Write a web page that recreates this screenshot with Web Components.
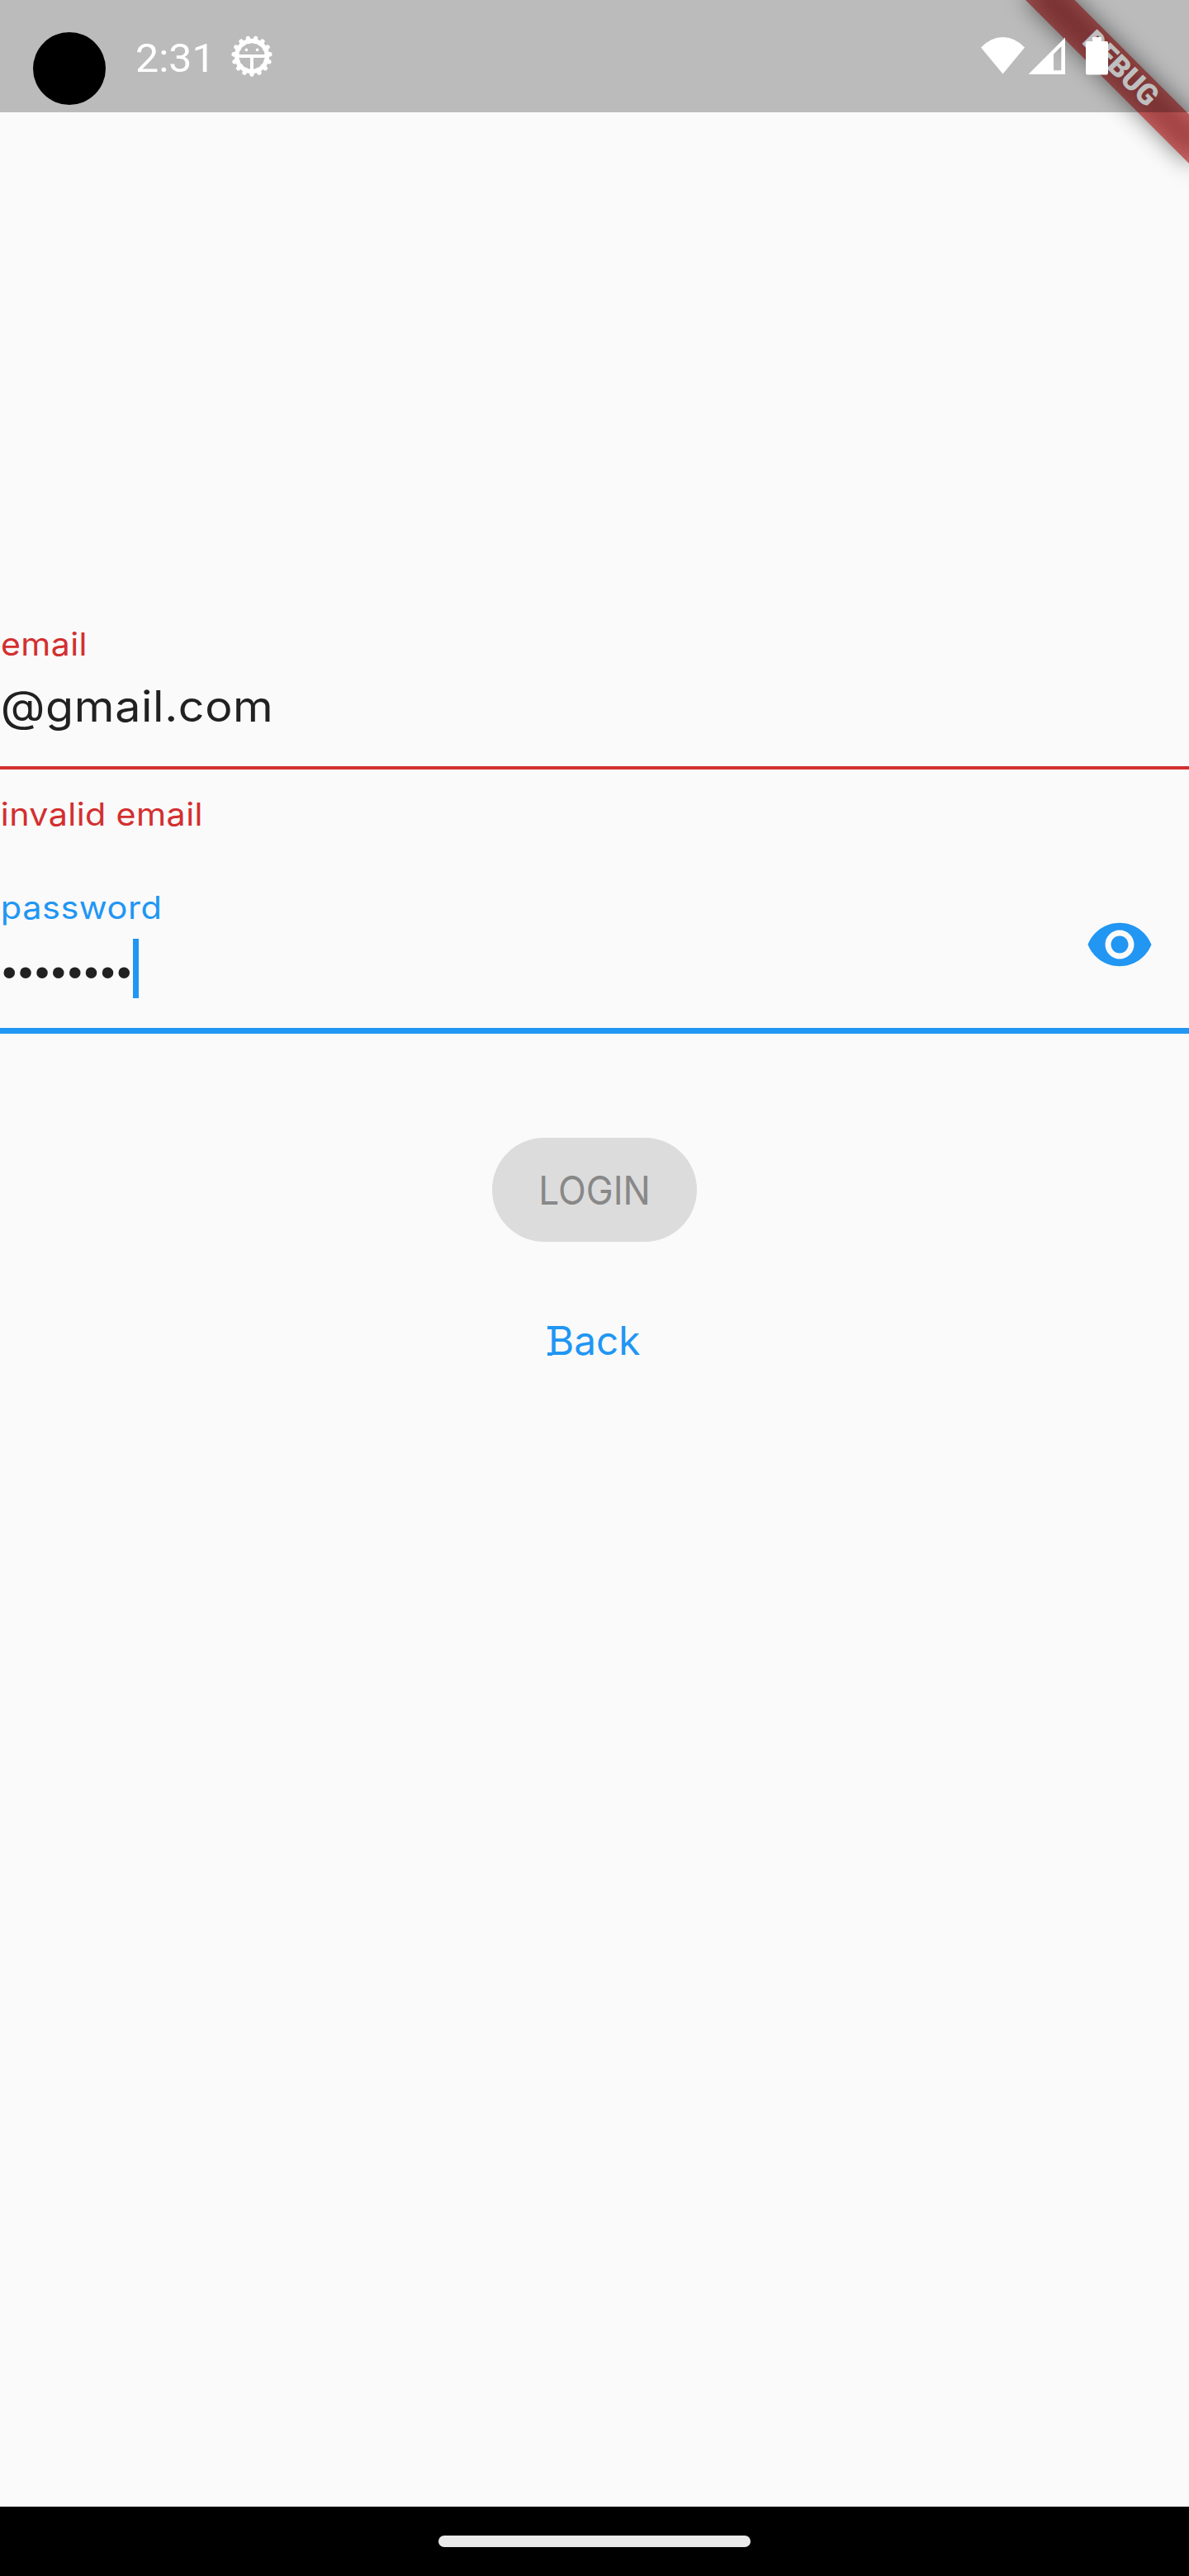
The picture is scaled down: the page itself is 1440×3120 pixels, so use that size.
<!DOCTYPE html>
<html lang="en">
<head>
<meta charset="utf-8">
<title>Login</title>
<style>
html,body{margin:0;padding:0;background:#fafafa}
body{width:1440px;height:3120px;overflow:hidden}
</style>
</head>
<body>
<login-app></login-app>
<script>
function mount(el, html) {
  el.attachShadow({mode: 'open'}).innerHTML = html;
  return el.shadowRoot;
}

// A single line of text whose inked width is fitted to the "ink" attribute:
// the "spacing" share (0 to 1) of the difference goes to letter-spacing,
// the rest to a horizontal scale.
customElements.define('text-run', class extends HTMLElement {
  connectedCallback() {
    const size = +this.getAttribute('size');
    const ink = +this.getAttribute('ink');
    const line = this.getAttribute('line');
    const family = this.getAttribute('family') || 'Inter';
    const weight = this.getAttribute('weight') || '400';
    const text = this.getAttribute('text');
    const share = +(this.getAttribute('spacing') || 0);
    const ctx = document.createElement('canvas').getContext('2d');
    ctx.font = `${weight} ${size}px "${family}"`;
    const m = ctx.measureText(text);
    const natural = m.actualBoundingBoxRight + m.actualBoundingBoxLeft;
    const extra = (ink - natural) * share;
    const gap = extra / (text.length - 1);
    const k = ink / (natural + extra);
    mount(this, `<style>
      :host{display:block;width:${ink}px;height:${line}px;white-space:nowrap}
      span{display:inline-block;font:${weight} ${size}px/${line}px "${family}",sans-serif;letter-spacing:${gap}px;
        transform-origin:0 0;transform:scaleX(${k}) translateX(${m.actualBoundingBoxLeft}px)}
    </style><span></span>`).querySelector('span').textContent = text;
  }
});

customElements.define('status-bar', class extends HTMLElement {
  connectedCallback() {
    mount(this, `<style>
      :host{display:flex;box-sizing:border-box;width:1440px;height:136px;padding-left:40px;color:#fff;background:rgba(0,0,0,.25)}
      .cam{width:88px;height:88px;border-radius:50%;background:#000;margin-top:39px}
      text-run{margin:40.5px 0 0 38px}
      .gear{width:52px;height:52px;margin:42px 0 0 28px}
      .right{margin:40px 92px 0 auto;width:160px;height:56px}
      svg{display:block}
    </style>
    <div class="cam"></div>
    <text-run text="2:31" family="Roboto" size="49" line="60" ink="85"></text-run>
    <svg class="gear" viewBox="-26 -26 52 52"><g id="teeth" stroke="#fff" stroke-width="5.4" stroke-linecap="round"></g>
      <circle r="18.5" fill="none" stroke="#fff" stroke-width="5.4"/>
      <path d="M-17 0H17M0 0V18" stroke="#fff" stroke-width="4" fill="none"/>
      <circle cx="-6.6" cy="-7.6" r="1.8" fill="#fff"/><circle cx="6.6" cy="-7.6" r="1.8" fill="#fff"/></svg>
    <svg class="right" viewBox="1188 40 160 56" fill="#fff">
      <path d="M1188 57.5Q1200 45 1214.5 45T1241 57.5L1214.5 89.5Z"/>
      <path fill-rule="evenodd" d="M1245.5 90L1290 45.5V90ZM1276 65.5V85.3H1285.3V56.2Z"/>
      <path d="M1323 45H1334V50H1340Q1342 50 1342 52V88Q1342 90.5 1340 90.5H1317Q1315 90.5 1315 88V52Q1315 50 1317 50H1323Z"/>
    </svg>`);
    let t = '';
    for (let i = 0; i < 15; i++) {
      const a = Math.PI / 2 + i * 2 * Math.PI / 15, c = Math.cos(a), s = Math.sin(a);
      t += `<path d="M${c * 18} ${s * 18}L${c * 22} ${s * 22}"/>`;
    }
    this.shadowRoot.getElementById('teeth').innerHTML = t;
  }
});

customElements.define('debug-banner', class extends HTMLElement {
  connectedCallback() {
    mount(this, `<style>
      :host{display:block;position:absolute;left:1440px;top:0;width:0;height:0;transform:rotate(45deg);transform-origin:0 0}
      div{position:absolute;left:-140px;top:98px;width:280px;height:42px}
      .shade{background:rgba(0,0,0,.5);filter:blur(13.9px)}
      .band{background:rgba(183,28,28,.627);color:#fff;display:flex;justify-content:center}
      text-run{margin-top:-2px}
    </style><div class="shade"></div>
    <div class="band"><text-run text="DEBUG" family="Roboto" weight="900" size="35.7" line="42" ink="110"></text-run></div>`);
  }
});

customElements.define('text-field', class extends HTMLElement {
  connectedCallback() {
    mount(this, `<style>
      :host{display:block;color:#d32f2f}
      .row{display:flex;box-sizing:border-box}
      .main{flex:1}
      .rule{background:currentColor}
    </style>
    <div class="row"><div class="main"><slot name="label"></slot><slot name="value"></slot></div><slot name="icon"></slot></div>
    <div class="rule"></div><slot name="helper"></slot>`);
    this.shadowRoot.querySelector('.row').style.height = this.getAttribute('row') + 'px';
    this.shadowRoot.querySelector('.rule').style.height = this.getAttribute('rule') + 'px';
  }
});

customElements.define('eye-icon', class extends HTMLElement {
  connectedCallback() {
    mount(this, `<style>:host{display:block;width:84px;height:84px;margin:28px 42px 0 0}svg{display:block}</style>
    <svg width="84" height="84" viewBox="0 0 24 24" fill="currentColor"><path d="M12 4.5C7 4.5 2.73 7.61 1 12c1.73 4.39 6 7.5 11 7.5s9.27-3.11 11-7.5c-1.73-4.39-6-7.5-11-7.5zM12 17c-2.76 0-5-2.24-5-5s2.24-5 5-5 5 2.24 5 5-2.24 5-5 5zm0-8c-1.66 0-3 1.34-3 3s1.34 3 3 3 3-1.34 3-3-1.34-3-3-3z"/></svg>`);
  }
});

customElements.define('pill-button', class extends HTMLElement {
  connectedCallback() {
    mount(this, `<style>:host{display:flex;align-items:center;justify-content:center;box-sizing:border-box;width:248px;height:126px;padding-top:2px;border-radius:63px;background:#dcdcdc;color:#888}</style><slot></slot>`);
  }
});

customElements.define('nav-bar', class extends HTMLElement {
  connectedCallback() {
    mount(this, `<style>:host{display:flex;align-items:center;justify-content:center;height:84px;background:#000}
      div{width:378px;height:14px;border-radius:7px;background:#eaeaea}</style><div></div>`);
  }
});

customElements.define('login-app', class extends HTMLElement {
  connectedCallback() {
    mount(this, `<style>
      :host{display:flex;flex-direction:column;position:relative;width:1440px;height:3120px;overflow:hidden;background:#fafafa}
      status-bar{position:relative;z-index:2;flex:none}
      debug-banner{z-index:1}
      main{flex:1;padding-top:619px;display:flex;flex-direction:column}
      .email{height:319px}
      .email [slot=label]{margin-left:2px}
      .email [slot=value]{margin:17px 0 0 4px;color:#212121}
      .email [slot=helper]{margin:29px 0 0 3px}
      .pass{color:#2196f3;height:178px}
      .pass [slot=label]{margin-left:3px}
      .pass [slot=value]{display:flex;margin-top:13px;padding-left:3.5px}
      .pass [slot=value] text-run{color:#212121}
      .cursor{width:7px;height:71.5px;margin-left:3.5px;background:#2196f3}
      pill-button{margin:126px 0 0 596px}
      .back{display:flex;margin:89.5px 0 0 663px;width:112px;color:#2196f3}
      .serif{box-sizing:border-box;width:6px;height:35.5px;margin-top:12.5px;margin-right:-1px;border:solid currentColor;border-width:4px 0}
    </style>
    <status-bar></status-bar>
    <main>
      <text-field class="email" row="173" rule="4">
        <text-run slot="label" text="email" size="38.5" line="50" ink="101" spacing=".2"></text-run>
        <text-run slot="value" text="@gmail.com" size="52" line="67" ink="323" spacing=".2"></text-run>
        <text-run slot="helper" text="invalid email" size="38.5" line="50" ink="240" spacing=".2"></text-run>
      </text-field>
      <text-field class="pass" row="171" rule="7">
        <text-run slot="label" text="password" size="38.5" line="50" ink="190" spacing=".2"></text-run>
        <div slot="value"><text-run text="••••••••" family="Liberation Sans" size="50" line="82" ink="154" spacing="1"></text-run><div class="cursor"></div></div>
        <eye-icon slot="icon"></eye-icon>
      </text-field>
      <pill-button><text-run text="LOGIN" size="48" line="62" ink="128"></text-run></pill-button>
      <div class="back"><div class="serif"></div><text-run text="Back" size="48" line="60" ink="107"></text-run></div>
    </main>
    <nav-bar></nav-bar>
    <debug-banner></debug-banner>`);
  }
});
</script>
</body>
</html>
